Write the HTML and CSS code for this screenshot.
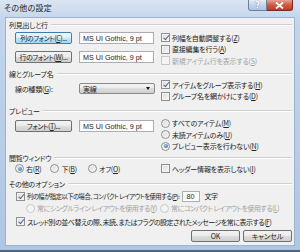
FILE: index.html
```html
<!DOCTYPE html>
<html lang="ja">
<head>
    <meta charset="UTF-8">
    <title>その他の設定</title>
    <link rel="stylesheet" href="styles.css">
</head>
<body>
    <div class="window">
        <div class="titlebar">
            <span class="title">その他の設定</span>
            <div class="caption">
                <span class="cap help">?</span>
                <span class="cap close">
                    <svg width="9" height="7" viewBox="0 0 9 7"><path d="M1 0.5 L8 6.5 M8 0.5 L1 6.5" stroke="#fff" stroke-width="1.8"/></svg>
                </span>
            </div>
        </div>

        <div class="client">
            <div class="head"><span>列見出しと行</span></div>
            <div class="body g1">
                <div class="left">
                    <div class="frow"><span class="btn hot">列のフォント(<u>C</u>)...</span><span class="tbox">MS UI Gothic, 9 pt</span></div>
                    <div class="frow second"><span class="btn">行のフォント(<u>W</u>)...</span><span class="tbox">MS UI Gothic, 9 pt</span></div>
                </div>
                <div class="right">
                    <div class="opt"><span class="cb on"></span>列幅を自動調整する(<u>Z</u>)</div>
                    <div class="opt"><span class="cb"></span>直接編集を行う(<u>A</u>)</div>
                    <div class="opt off"><span class="cb"></span>新規アイテム行を表示する(<u>S</u>)</div>
                </div>
            </div>

            <div class="head"><span>線とグループ名</span></div>
            <div class="body g2">
                <div class="left">
                    <div class="frow">
                        <span class="lbl">線の種類(<u>G</u>):</span>
                        <span class="combo">実線<i class="arrow"></i></span>
                    </div>
                </div>
                <div class="right">
                    <div class="opt"><span class="cb on"></span>アイテムをグループ表示する(<u>H</u>)</div>
                    <div class="opt"><span class="cb"></span>グループ名を網かけにする(<u>D</u>)</div>
                </div>
            </div>

            <div class="head"><span>プレビュー</span></div>
            <div class="body g3">
                <div class="left">
                    <div class="frow"><span class="btn">フォント(<u>T</u>)...</span><span class="tbox">MS UI Gothic, 9 pt</span></div>
                </div>
                <div class="right">
                    <div class="opt"><span class="rb"></span>すべてのアイテム(<u>M</u>)</div>
                    <div class="opt"><span class="rb"></span>未読アイテムのみ(<u>U</u>)</div>
                    <div class="opt"><span class="rb on"></span>プレビュー表示を行わない(<u>N</u>)</div>
                </div>
            </div>

            <div class="head"><span>閲覧ウィンドウ</span></div>
            <div class="body g4">
                <div class="left radios">
                    <div class="opt"><span class="rb on"></span>右(<u>R</u>)</div>
                    <div class="opt"><span class="rb"></span>下(<u>B</u>)</div>
                    <div class="opt"><span class="rb"></span>オフ(<u>O</u>)</div>
                </div>
                <div class="right">
                    <div class="opt"><span class="cb"></span>ヘッダー情報を表示しない(<u>I</u>)</div>
                </div>
            </div>

            <div class="head"><span>その他のオプション</span></div>
            <div class="body g5">
                <div class="opt"><span class="cb on"></span><span class="tight">列の幅が指定以下の場合、コンパクト レイアウトを使用する(<u>P</u>):</span><span class="tbox num">80</span>文字</div>
                <div class="opt off sub">
                    <span class="pair"><span class="rb"></span>常にシングルライン レイアウトを使用する(<u>Y</u>)</span>
                    <span class="pair"><span class="rb"></span>常にコンパクト レイアウトを使用する(<u>L</u>)</span>
                </div>
                <div class="opt last"><span class="cb on"></span>スレッド別の並べ替えの際、未読、またはフラグの設定されたメッセージを常に表示する(<u>F</u>)</div>
            </div>

            <div class="footer">
                <span class="btn wide">OK</span>
                <span class="btn wide">キャンセル</span>
            </div>
        </div>
    </div>
</body>
</html>
```
FILE: styles.css
```css
body {
    margin: 0;
    font-family: "Noto Sans CJK JP", sans-serif;
    font-size: 7px;
    letter-spacing: -0.2px;
    font-feature-settings: "palt";
    color: #222;
}
u {
    text-decoration: underline;
}
.window {
    width: 300px;
    height: 252px;
    box-sizing: border-box;
    background: linear-gradient(#dbe5f2, #c2d5ec 20px, #adc6e4);
    border-bottom: 2px solid #52657f;
    overflow: hidden;
}
.titlebar {
    height: 17px;
    display: flex;
    justify-content: space-between;
    align-items: flex-start;
    padding: 0 7px 0 4px;
}
.title {
    font-size: 8px;
    letter-spacing: 0.2px;
    line-height: 15px;
    color: #222;
}
.caption {
    display: flex;
}
.cap {
    height: 11px;
    box-sizing: border-box;
    display: flex;
    align-items: center;
    justify-content: center;
    border: 1px solid #6b7f9c;
    border-top: none;
}
.help {
    width: 19px;
    border-radius: 0 0 0 3px;
    background: linear-gradient(#e4ecf6, #c3d4e9 50%, #aec4e0);
    color: #fff;
    font-family: "DejaVu Sans", sans-serif;
    font-size: 8px;
    font-weight: bold;
    text-shadow: 0 0 1px #4b6080;
}
.close {
    width: 26px;
    border-radius: 0 0 3px 0;
    border-color: #7a2a1e;
    border-left: none;
    background: linear-gradient(#e6a192, #cf5a42 50%, #c23a22);
}
.client {
    margin: 0 5px;
    height: 229px;
    box-sizing: border-box;
    background: #f0f0f0;
    border: 1px solid #9fb3cc;
}
.head {
    display: flex;
    align-items: center;
    height: 10px;
    padding: 0 2px 0 3px;
}
.head::after {
    content: "";
    flex: 1;
    margin-left: 3px;
    border-top: 1px solid #d0d0d0;
    border-bottom: 1px solid #fff;
}
.head:first-child {
    margin-top: 2px;
}
.body {
    display: grid;
    grid-template-columns: 154px 1fr;
}
.left {
    padding-left: 9px;
}
.right {
    padding-left: 1px;
}
.frow {
    display: flex;
    align-items: center;
    height: 12px;
    gap: 7px;
}
.opt {
    display: flex;
    align-items: center;
    height: 11.5px;
    white-space: nowrap;
}
.off {
    color: #a2a2a2;
}
.btn {
    width: 57px;
    height: 12px;
    box-sizing: border-box;
    display: flex;
    align-items: center;
    justify-content: center;
    border: 1px solid #707070;
    border-radius: 2px;
    background: linear-gradient(#f3f3f3, #ebebeb 50%, #dddddd 50%, #cfcfcf);
    white-space: nowrap;
    letter-spacing: -0.45px;
}
.btn.hot {
    border-color: #3c7fb1;
    background: linear-gradient(#eaf6fd, #d9f0fc 50%, #bee6fd 50%, #a7d9f5);
}
.tbox {
    width: 75px;
    height: 12px;
    box-sizing: border-box;
    display: flex;
    align-items: center;
    padding-left: 3px;
    background: #fff;
    border: 1px solid #abadb3;
    font-family: "Liberation Sans", sans-serif;
    font-size: 7.2px;
    letter-spacing: 0;
}
.lbl {
    width: 57px;
}
.combo {
    width: 76px;
    height: 11px;
    box-sizing: border-box;
    display: flex;
    align-items: center;
    justify-content: space-between;
    padding: 0 4px 0 3px;
    border: 1px solid #8a8a8a;
    border-radius: 2px;
    background: linear-gradient(#f2f2f2, #ebebeb 50%, #dddddd 50%, #d0d0d0);
}
.arrow {
    width: 0;
    height: 0;
    border-left: 2.5px solid transparent;
    border-right: 2.5px solid transparent;
    border-top: 3px solid #111;
}
.cb, .rb {
    width: 9px;
    height: 9px;
    box-sizing: border-box;
    margin-right: 2px;
    flex: none;
    border: 1px solid #8e8f8f;
    background: linear-gradient(135deg, #dcdcdc, #f6f6f6);
    box-shadow: inset 0 0 0 1px #f4f4f4;
    position: relative;
}
.rb {
    border-radius: 50%;
}
.cb.on::after {
    content: "";
    position: absolute;
    left: 2.5px;
    top: 0;
    width: 2px;
    height: 4.5px;
    border: solid #4a5f94;
    border-width: 0 1.5px 1.5px 0;
    transform: rotate(40deg);
}
.rb.on::after {
    content: "";
    position: absolute;
    left: 1.5px;
    top: 1.5px;
    width: 4px;
    height: 4px;
    border-radius: 50%;
    background: radial-gradient(circle at 40% 35%, #8ec0f0, #2a62b0);
}
.off .cb, .off .rb {
    border-color: #c8c8c8;
    background: #f4f4f4;
}

/* group 1 */
.g1 {
    height: 39px;
}
.g1 .left {
    padding-top: 2px;
}
.g1 .second {
    margin-top: 7px;
}
.g1 .right {
    padding-top: 2px;
}

/* group 2 */
.g2 {
    height: 27px;
}
.g2 .left {
    padding-top: 4px;
}
.g2 .frow {
    height: 11px;
}

/* group 3 */
.g3 {
    height: 37px;
}
.g3 .left {
    padding-top: 4px;
}
.g3 .right {
    padding-top: 1.5px;
}

/* group 4 */
.g4 {
    height: 16px;
}
.g4 .opt {
    height: 11px;
}
.radios {
    display: flex;
    gap: 9px;
}
.radios .opt:nth-child(2) {
    margin-right: 2px;
}

/* group 5 */
.g5 {
    display: block;
    padding: 1px 0 0 10px;
    letter-spacing: -0.5px;
}
.g5 .opt {
    height: 12px;
}
.tight {
    font-size: 6.3px;
    letter-spacing: -0.5px;
}
.num {
    width: 18px;
    height: 11px;
    margin: 0 5px 0 2px;
    padding-left: 4px;
}
.sub {
    padding-left: 10px;
}
.pair {
    display: flex;
    align-items: center;
    width: 141px;
}
.g5 .last {
    margin-top: 1.5px;
}

.footer {
    display: flex;
    justify-content: flex-end;
    gap: 3px;
    padding: 2.5px 2px 0 0;
}
.btn.wide {
    width: 49px;
    letter-spacing: 0;
}
```
